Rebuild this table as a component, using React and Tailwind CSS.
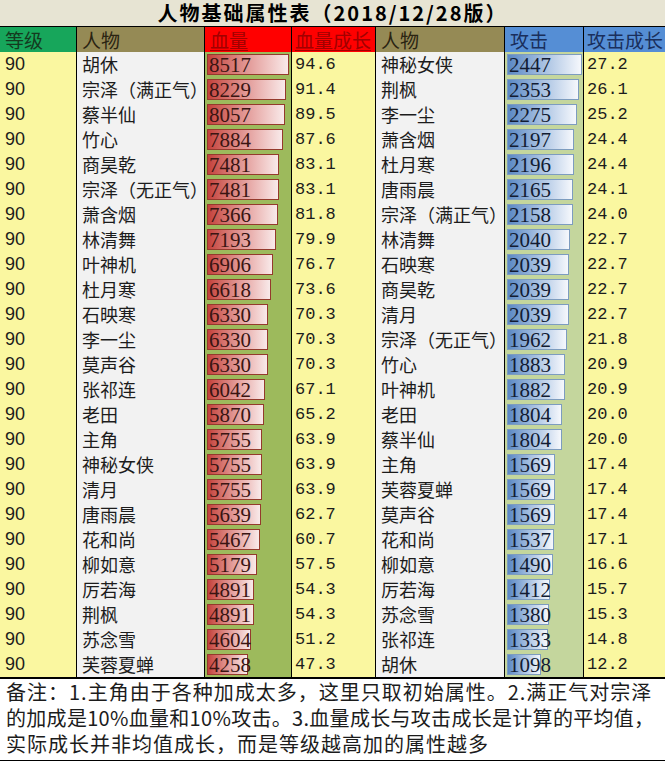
const hpRows = [
  ["胡休", 8517, "94.6"],
  ["宗泽（满正气）", 8229, "91.4"],
  ["蔡半仙", 8057, "89.5"],
  ["竹心", 7884, "87.6"],
  ["商昊乾", 7481, "83.1"],
  ["宗泽（无正气）", 7481, "83.1"],
  ["萧含烟", 7366, "81.8"],
  ["林清舞", 7193, "79.9"],
  ["叶神机", 6906, "76.7"],
  ["杜月寒", 6618, "73.6"],
  ["石映寒", 6330, "70.3"],
  ["李一尘", 6330, "70.3"],
  ["莫声谷", 6330, "70.3"],
  ["张祁连", 6042, "67.1"],
  ["老田", 5870, "65.2"],
  ["主角", 5755, "63.9"],
  ["神秘女侠", 5755, "63.9"],
  ["清月", 5755, "63.9"],
  ["唐雨晨", 5639, "62.7"],
  ["花和尚", 5467, "60.7"],
  ["柳如意", 5179, "57.5"],
  ["厉若海", 4891, "54.3"],
  ["荆枫", 4891, "54.3"],
  ["苏念雪", 4604, "51.2"],
  ["芙蓉夏蝉", 4258, "47.3"],
];

const atkRows = [
  ["神秘女侠", 2447, "27.2"],
  ["荆枫", 2353, "26.1"],
  ["李一尘", 2275, "25.2"],
  ["萧含烟", 2197, "24.4"],
  ["杜月寒", 2196, "24.4"],
  ["唐雨晨", 2165, "24.1"],
  ["宗泽（满正气）", 2158, "24.0"],
  ["林清舞", 2040, "22.7"],
  ["石映寒", 2039, "22.7"],
  ["商昊乾", 2039, "22.7"],
  ["清月", 2039, "22.7"],
  ["宗泽（无正气）", 1962, "21.8"],
  ["竹心", 1883, "20.9"],
  ["叶神机", 1882, "20.9"],
  ["老田", 1804, "20.0"],
  ["蔡半仙", 1804, "20.0"],
  ["主角", 1569, "17.4"],
  ["芙蓉夏蝉", 1569, "17.4"],
  ["莫声谷", 1569, "17.4"],
  ["花和尚", 1537, "17.1"],
  ["柳如意", 1490, "16.6"],
  ["厉若海", 1412, "15.7"],
  ["苏念雪", 1380, "15.3"],
  ["张祁连", 1333, "14.8"],
  ["胡休", 1098, "12.2"],
];

const grid = "grid grid-cols-[77px_128px_87px_84px_129px_79px_81px]";
const cjk = "font-['Noto_Sans_CJK_SC',sans-serif]";
const mono = "font-['Liberation_Mono',monospace]";

function HpBar({ value }) {
  return (
    <div
      className="h-[21px] border border-[#943a2c] bg-linear-to-r from-[#c4403c] via-[#e29a98] to-[#f8eaea] pl-[1px] font-['Liberation_Serif',serif] text-[21px] leading-[20px] whitespace-nowrap text-[#3a1512]"
      style={{ width: Math.round((value / 8517) * 82) }}
    >
      {value}
    </div>
  );
}

function AtkBar({ value }) {
  return (
    <div
      className="h-[21px] border border-[#7d9cbf] bg-linear-to-r from-[#5a88c4] via-[#a9c2e2] to-[#f6f8fc] pl-[1px] font-['Liberation_Serif',serif] text-[21px] leading-[20px] whitespace-nowrap text-[#121c33]"
      style={{ width: Math.round((value / 2447) * 75) }}
    >
      {value}
    </div>
  );
}

function Row({ hp, atk }) {
  return (
    <div className={`${grid} h-[25px] text-[#1c1c1c]`}>
      <div className="border-r border-black bg-[#faf7a0] pl-[5px] font-['Liberation_Sans',sans-serif] text-[18px] leading-[25px]">90</div>
      <div className={`border-r border-black bg-[#f2f2f2] pl-[5px] ${cjk} text-[18px] leading-[25px] whitespace-nowrap`}>{hp[0]}</div>
      <div className="flex items-center border-r border-black bg-[#9dba5c] pl-[2px]">
        <HpBar value={hp[1]} />
      </div>
      <div className={`border-r border-black bg-[#faf7a0] pl-[3px] ${mono} text-[17px] leading-[25px]`}>{hp[2]}</div>
      <div className={`border-r border-black bg-[#f2f2f2] pl-[5px] ${cjk} text-[18px] leading-[25px] whitespace-nowrap`}>{atk[0]}</div>
      <div className="flex items-center border-r border-black bg-[#c4d69d] pl-[2px]">
        <AtkBar value={atk[1]} />
      </div>
      <div className={`bg-[#faf7a0] pl-[3px] ${mono} text-[17px] leading-[25px]`}>{atk[2]}</div>
    </div>
  );
}

export default function App() {
  return (
    <div className="w-[665px] h-[762px] overflow-hidden bg-white">
      <div className={`flex h-[27px] items-center justify-center border-b border-black bg-[#e7e4d3] ${cjk} text-[20px] leading-[24px] font-bold tracking-[2px] text-black`}>
        人物基础属性表（2018/12/28版）
      </div>
      <div className={`${grid} h-[25px] ${cjk} text-[19px] leading-[25px]`}>
        <div className="border-r border-black bg-[#17a65b] pl-[5px] text-[#143a1f]">等级</div>
        <div className="border-r border-black bg-[#958a55] pl-[5px] text-[#2a2412]">人物</div>
        <div className="border-r border-black bg-[#ff0000] pl-[5px] text-[#a10000] underline underline-offset-2">血量</div>
        <div className="border-r border-black bg-[#ff0000] pl-[3px] text-[#a10000] underline underline-offset-2">血量成长</div>
        <div className="border-r border-black bg-[#958a55] pl-[5px] text-[#2a2412]">人物</div>
        <div className="border-r border-black bg-[#558ed5] pl-[5px] text-[#1a2f5c]">攻击</div>
        <div className="bg-[#558ed5] pl-[3px] text-[#1a2f5c]">攻击成长</div>
      </div>
      {hpRows.map((hp, i) => (
        <Row key={i} hp={hp} atk={atkRows[i]} />
      ))}
      <div className={`flex h-[84px] flex-col border-t-2 border-b border-black pl-[6px] ${cjk} text-[20px] leading-[26px] whitespace-nowrap text-[#1c1c1c]`}>
        <div className="tracking-[1px]">备注：1.主角由于各种加成太多，这里只取初始属性。2.满正气对宗泽</div>
        <div className="tracking-[0.3px]">的加成是10%血量和10%攻击。3.血量成长与攻击成长是计算的平均值，</div>
        <div className="tracking-[1px]">实际成长并非均值成长，而是等级越高加的属性越多</div>
      </div>
    </div>
  );
}
